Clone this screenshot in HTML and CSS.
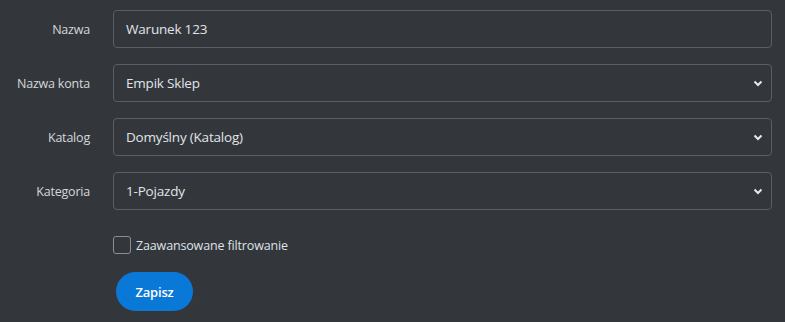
FILE: index.html
```html
<!DOCTYPE html>
<html>
  <head>
    <title>Warunek</title>
    <link rel="stylesheet" href="styles.css">
  </head>
  <body>
    <form class="rule-form">
      <div class="row">
        <label for="name">Nazwa</label>
        <input type="text" id="name" value="Warunek 123">
      </div>
      <div class="row">
        <label for="account">Nazwa konta</label>
        <div class="select">
          <span>Empik Sklep</span>
          <svg width="10" height="7" viewBox="0 0 10 7"><path d="M1.5 1.5 L5 5 L8.5 1.5" fill="none" stroke="#e6e8eb" stroke-width="2"/></svg>
        </div>
      </div>
      <div class="row">
        <label for="catalog">Katalog</label>
        <div class="select">
          <span>Domyślny (Katalog)</span>
          <svg width="10" height="7" viewBox="0 0 10 7"><path d="M1.5 1.5 L5 5 L8.5 1.5" fill="none" stroke="#e6e8eb" stroke-width="2"/></svg>
        </div>
      </div>
      <div class="row">
        <label for="category">Kategoria</label>
        <div class="select">
          <span>1-Pojazdy</span>
          <svg width="10" height="7" viewBox="0 0 10 7"><path d="M1.5 1.5 L5 5 L8.5 1.5" fill="none" stroke="#e6e8eb" stroke-width="2"/></svg>
        </div>
      </div>
      <div class="check-row">
        <span class="box"></span>
        <span>Zaawansowane filtrowanie</span>
      </div>
      <div class="actions">
        <button type="button">Zapisz</button>
      </div>
    </form>
  </body>
</html>
```
FILE: styles.css
```css
body {
  margin: 0;
  background-color: #33373c;
  font-family: "Open Sans", "Noto Sans", sans-serif;
  color: #dfe2e6;
}

.rule-form {
  padding: 10px 13px 0 0;
}
.row {
  display: grid;
  grid-template-columns: 90px 1fr;
  column-gap: 23px;
  align-items: center;
  margin-bottom: 16px;
}
.row label {
  text-align: right;
  font-size: 12.5px;
  color: #d4d7db;
  letter-spacing: -0.2px;
}
.row input,
.select {
  box-sizing: border-box;
  height: 38px;
  border: 1px solid #595d67;
  border-radius: 4px;
  background-color: #33373c;
  color: #e1e4e8;
  font-family: inherit;
  font-size: 13.5px;
  letter-spacing: -0.2px;
  padding: 0 12px;
  width: 100%;
}
.select {
  display: flex;
  align-items: center;
  justify-content: space-between;
  padding-right: 8px;
}

.check-row {
  display: flex;
  align-items: center;
  gap: 5px;
  margin: 26px 0 0 113px;
  font-size: 12.5px;
  letter-spacing: -0.15px;
}
.box {
  box-sizing: border-box;
  width: 18px;
  height: 18px;
  border: 1px solid #8a8e96;
  border-radius: 3px;
}

.actions {
  margin: 18px 0 0 116px;
}
.actions button {
  width: 77px;
  height: 39px;
  border: none;
  border-radius: 20px;
  background-color: #0a78d6;
  color: #fff;
  font-family: inherit;
  font-weight: 600;
  font-size: 13px;
  letter-spacing: -0.2px;
}
```
